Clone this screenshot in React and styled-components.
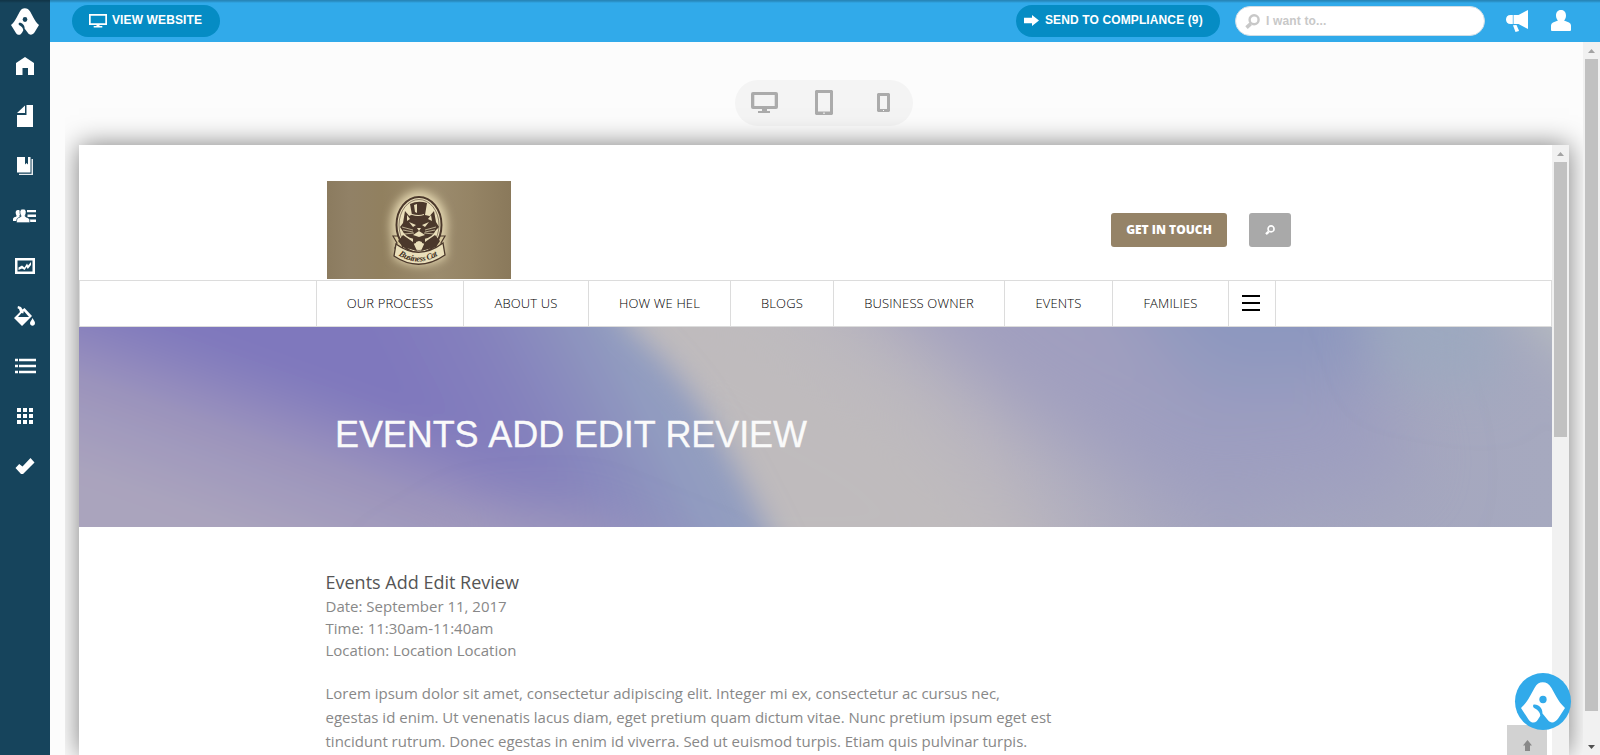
import React from "react";
import styled, { createGlobalStyle } from "styled-components";

const Global = createGlobalStyle`
  * { box-sizing: border-box; }
  html, body { margin: 0; padding: 0; overflow: hidden; }
  svg { display: block; flex: none; }
`;

const sans = `"Liberation Sans", Arial, sans-serif`;
const open = `"Open Sans", "Noto Sans", sans-serif`;

const Shell = styled.div`
  position: relative;
  display: flex;
  width: 100%;
  height: 100vh;
  overflow: hidden;
  background: #fcfcfc;
  font-family: ${sans};
`;

const TopShade = styled.div`
  position: absolute;
  inset: 0 0 auto 0;
  height: 3px;
  background: linear-gradient(rgba(0, 0, 0, 0.24), rgba(0, 0, 0, 0.12) 60%, transparent);
`;

const Sidebar = styled.nav`
  flex: none;
  width: 50px;
  background: #16445c;
`;

const SideLogo = styled.div`
  display: flex;
  justify-content: center;
  height: 41px;
  padding-top: 8px;
`;

const SideItem = styled.a`
  display: flex;
  align-items: center;
  justify-content: center;
  height: 50px;
  color: #fff;
`;

const Column = styled.div`
  flex: 1;
  display: flex;
  flex-direction: column;
  min-width: 0;
`;

const TopBar = styled.header`
  flex: none;
  display: flex;
  align-items: center;
  height: 42px;
  padding-left: 22px;
  background: #31aaea;
`;

const PillButton = styled.button`
  display: flex;
  align-items: center;
  width: ${(p) => p.$width}px;
  height: 32px;
  padding: 0 0 2px ${(p) => p.$inset}px;
  gap: ${(p) => p.$gap}px;
  border: 0;
  border-radius: 16px;
  background: #058cc4;
  color: #fff;
  font: bold 12px/16px ${sans};
  letter-spacing: 0.12px;
  white-space: nowrap;
`;

const TopRight = styled.div`
  display: flex;
  align-items: center;
  margin-left: auto;
  padding-right: 29px;
  color: #fff;
`;

const SearchBox = styled.div`
  display: flex;
  align-items: center;
  gap: 6px;
  width: 250px;
  height: 30px;
  margin: 0 21px 0 15px;
  padding-left: 9px;
  border: 1px solid #cfdde6;
  border-radius: 15px;
  background: #fff;
  color: #c8c8c8;
  font: bold 12px/16px ${sans};
  letter-spacing: 0.15px;
`;

const UserSlot = styled.div`
  margin: -1px 0 0 23px;
`;

const Body = styled.div`
  flex: 1;
  display: flex;
  min-height: 0;
`;

const Workspace = styled.main`
  flex: 1;
  display: flex;
  flex-direction: column;
  min-width: 0;
  margin-left: 15px;
  padding: 38px 14px 0;
  overflow: hidden;
`;

const Devices = styled.div`
  flex: none;
  align-self: center;
  display: flex;
  align-items: center;
  width: 178px;
  height: 46px;
  margin-bottom: 19px;
  padding: 0 0 1px 16px;
  border-radius: 23px;
  background: #f4f4f4;
  color: #ababab;
`;

const TabletSlot = styled.div`
  margin: 0 44px 0 37px;
`;

const Frame = styled.section`
  flex: 1;
  display: flex;
  min-height: 0;
  background: #fff;
  box-shadow: 0 0 25px rgba(0, 0, 0, 0.5);
`;

const Page = styled.div`
  flex: 1;
  min-width: 0;
  overflow: hidden;
`;

const Track = styled.div`
  flex: none;
  display: flex;
  flex-direction: column;
  align-items: center;
  width: 17px;
  background: #f1f1f1;
`;

const TrackArrow = styled.div`
  flex: none;
  display: flex;
  align-items: center;
  justify-content: center;
  width: 17px;
  height: 17px;
`;

const Thumb = styled.div`
  flex: none;
  width: 13px;
  height: ${(p) => p.$height}px;
  margin-bottom: auto;
  background: #c1c1c1;
`;

const SiteHeader = styled.div`
  display: flex;
  width: 1212px;
  height: 135px;
  padding-left: 248px;
`;

const SiteLogo = styled.div`
  margin: 36px auto 0 0;
`;

const SiteButton = styled.button`
  display: flex;
  align-items: center;
  justify-content: center;
  width: ${(p) => p.$width}px;
  height: 34px;
  margin: 68px 0 0 ${(p) => p.$left || 0}px;
  padding: 0;
  border: 0;
  border-radius: 3px;
  background: ${(p) => p.$bg};
  color: #fff;
  font: 800 12px/18px ${open};
  white-space: nowrap;
`;

const SiteNav = styled.nav`
  display: flex;
  height: 47px;
  padding-left: 236px;
  border: 1px solid #dcdcdc;
`;

const NavItem = styled.a`
  display: flex;
  align-items: center;
  justify-content: center;
  width: ${(p) => p.$width}px;
  padding-bottom: 2px;
  border-left: 1px solid #dcdcdc;
  color: #000;
  font: 300 13px/18px ${open};
  letter-spacing: 0.14px;
  white-space: nowrap;
`;

const MenuItem = styled.a`
  display: flex;
  flex-direction: column;
  align-items: center;
  justify-content: center;
  gap: 5px;
  width: 48px;
  padding: 0 2px 2px 0;
  border: solid #dcdcdc;
  border-width: 0 1px;
`;

const MenuBar = styled.span`
  width: 18px;
  height: 2px;
  background: #000;
`;

const Banner = styled.div`
  display: grid;
  height: 200px;
  overflow: hidden;
  > * { grid-area: 1 / 1; }
`;

const BannerTitle = styled.h1`
  z-index: 1;
  margin: 86px 0 0 256px;
  color: #fafafa;
  font: 400 36px/43px ${sans};
  font-kerning: none;
  letter-spacing: -0.1px;
  -webkit-text-stroke: 0.3px #fafafa;
  white-space: nowrap;
`;

const Article = styled.article`
  width: 1000px;
  padding: 42px 0 0 246.5px;
  color: #888;
  font: 400 15px/22px ${open};
  white-space: nowrap;
`;

const EventName = styled.h2`
  margin: 0;
  color: #555;
  font: 400 18px/26px ${open};
`;

const Copy = styled.p`
  margin: 20px 0 0;
  line-height: 24px;
`;

const BackToTop = styled.div`
  position: absolute;
  left: 1507px;
  top: 725px;
  display: flex;
  justify-content: center;
  width: 40px;
  height: 40px;
  padding-top: 15px;
  background: #d2d2d2;
`;

const Support = styled.div`
  position: absolute;
  left: 1515px;
  top: 673px;
  display: flex;
  justify-content: center;
  width: 56px;
  height: 57px;
  padding-top: 9px;
  border-radius: 50%;
  background: #31aaea;
`;

const Brand = ({ w, h, dot }) => (
  <svg width={w} height={h} viewBox="0 0 132 122" preserveAspectRatio="none">
    <path
      fill="#fff"
      d="M65 1C76 1 84 6 91 17L106 44C113 57 121 67 132 77L112 108C103 121 90 125 81 114L64 93C66 80 54 65 38 67C34 72 37 77 42 79C51 84 57 90 58 100C55 106 52 111 47 117C40 123 31 122 24 114L0 77C11 67 19 57 26 44L41 17C47 6 55 1 65 1Z"
    />
    <circle cx="66" cy="52" r="11" fill={dot} />
  </svg>
);

const Icon = ({ w, h, children }) => (
  <svg width={w} height={h} viewBox={`0 0 ${w} ${h}`} fill="currentColor">
    {children}
  </svg>
);

const sideIcons = [
  <Icon w={18} h={18}><path d="M9 0L18 6V18H12V11H6.500V18H0V6Z" /></Icon>,
  <Icon w={16} h={22}><path d="M9.500 0H16V22H0V10H9.500ZM8 .5V8H0Z" /></Icon>,
  <Icon w={16} h={18}>
    <path d="M0 0H8V7.500L9.500 6L11 7.500V0H13.500V15.500H0Z" />
    <path d="M14.500 2H16V18H2V16.800H14.500Z" opacity=".9" />
  </Icon>,
  <Icon w={24} h={14}>
    <path d="M14 1H23V3.300H14ZM14.500 5.500H23V8H14.500ZM16 10.500H23V13H17Z" />
    <path d="M5 1C7 1 8 3 7 5.500C6 7 6.500 7.500 7 8L4 11V12H0C0 9 0 8.500 3 7.700C4 7.200 3.500 6.500 3 5.500C2 3 3 1 5 1Z" />
    <path stroke="#16445c" strokeWidth=".7" d="M10 0C12.500 0 13.500 1.800 13 4.300C12.300 6.500 11.500 7.200 13 8C16.500 9 16.800 10 16.800 13.700H3.500C3.500 10 4 9 7.300 8C8.700 7.200 7.500 6.500 7 4.300C6.500 1.800 7.500 0 10 0Z" />
  </Icon>,
  <Icon w={20} h={16}>
    <path fillRule="evenodd" d="M0 0H20V16H0ZM2.500 2.500V13.500H17.500V2.500Z" />
    <path d="M3.500 12V9.500L7 7.500L9.500 9.500L12 5.500L13 7.500L16 4V7L12.800 11L11.500 9L9.700 12L7 10.500Z" />
  </Icon>,
  <Icon w={22} h={20}>
    <path fillRule="evenodd" d="M4 0L7 1L8.500 3.500L10.500 2L18 10L8 20L0 12L6 6L5 3L3.500 2.300ZM9.800 5L9.300 7.500L7.500 7L4 11H15Z" />
    <path d="M18.500 12C20 14.500 21 15.500 21 17C21 20.500 16 20.500 16 17C16 15.500 17.500 14.500 18.500 12Z" />
  </Icon>,
  <Icon w={21} h={16}>
    {[1, 7, 13].map((y) => <path key={y} d={`M0 ${y - 0.3}H3V${y + 2.3}H0ZM4 ${y - 0.3}H21V${y + 2.3}H4Z`} />)}
  </Icon>,
  <Icon w={16} h={16}>
    {[0, 6, 12].map((y) => <path key={y} d={`M0 ${y}H4V${y + 4}H0ZM6 ${y}H10V${y + 4}H6ZM12 ${y}H16V${y + 4}H12Z`} />)}
  </Icon>,
  <Icon w={20} h={17}><path d="M15.500 0L19.500 4.500L8 16H6L.5 10L4.200 6L7.500 8.500Z" /></Icon>,
];

const SmallMonitor = () => (
  <Icon w={18} h={15}>
    <path fillRule="evenodd" d="M0 1H18V12H0ZM1.700 2.700V10.300H16.300V2.700Z" />
    <path d="M7.500 11H10.500V13H13.300V14.500H4.700V13H7.500Z" />
  </Icon>
);

const Monitor = () => (
  <Icon w={27} h={21}>
    <path fillRule="evenodd" d="M2 0H25Q27 0 27 2V15Q27 17 25 17H2Q0 17 0 15V2Q0 0 2 0ZM3.300 3V14H23.700V3Z" />
    <path d="M11 17H16V19H19V21H7V19H11Z" />
  </Icon>
);

const Tablet = () => (
  <Icon w={18} h={25}>
    <path fillRule="evenodd" d="M1 0H17L18 1V24L17 25H1L0 24V1ZM3 3V21.500H15V3Z" />
    <rect x="8" y="22.500" width="2" height="1.500" fill="#ddd" />
  </Icon>
);

const Phone = () => (
  <Icon w={13} h={19}>
    <path fillRule="evenodd" d="M1 0H12L13 1V18L12 19H1L0 18V1ZM3 3V16H10V3Z" />
    <rect x="6" y="17" width="1" height="1" fill="#fff" />
  </Icon>
);

const Lens = ({ size }) => (
  <svg width={size} height={size} viewBox="0 0 16 16" fill="none" stroke="currentColor">
    <circle cx="9.700" cy="6.200" r="4.800" strokeWidth="2.600" />
    <path d="M6 10.500L1.600 14.500" strokeWidth="3.800" />
  </svg>
);

const Horn = () => (
  <Icon w={22} h={22}>
    <path d="M22 0V19L12.500 14H7.500V5H12.500Z" />
    <path d="M6.800 5V14H4.500C1.500 14 0 12 0 9.500C0 7 1.500 5 4.500 5Z" />
    <path d="M7 15.200L10.500 15L12.500 19.500L13 21L9.500 22Z" />
  </Icon>
);

const Person = () => (
  <Icon w={20} h={21}>
    <path d="M10 0C13.500 0 15 2.500 15 5.500C15 8 14 9.500 13 10.500L18 12.500Q20 13.500 20 15.500V20Q20 21 19 21H1Q0 21 0 20V15.500Q0 13.500 2 12.500L7 10.500C6 9.500 5 8 5 5.500C5 2.500 6.500 0 10 0Z" />
  </Icon>
);

const Triangle = ({ down, color = "#a3a3a3" }) => (
  <svg width="7" height="4" viewBox="0 0 7 4" fill={color}>
    <path d={down ? "M0 0H7L3.500 4Z" : "M0 4H7L3.500 0Z"} />
  </svg>
);

const CatLogo = () => (
  <svg width="184" height="98" viewBox="0 0 184 98">
    <defs>
      <linearGradient id="leather">
        <stop offset="0" stopColor="#8b7b5f" /><stop offset=".12" stopColor="#918166" />
        <stop offset=".3" stopColor="#91805f" /><stop offset=".6" stopColor="#9b8b6d" />
        <stop offset=".78" stopColor="#958465" /><stop offset="1" stopColor="#8a795b" />
      </linearGradient>
      <filter id="glow" x="-50%" y="-50%" width="200%" height="200%"><feGaussianBlur stdDeviation="5" /></filter>
      <path id="ribbon" d="M71.500 74Q92 88 115 72" />
    </defs>
    <rect width="184" height="98" fill="url(#leather)" />
    <g fill="#e5d8b1" filter="url(#glow)">
      <ellipse cx="92" cy="45" rx="28" ry="35" /><path d="M65 53H119V76Q92 92 67 77Z" />
    </g>
    <g stroke="#4b382b">
      <path fill="#d9ca9f" strokeWidth="1.200" d="M66 55H73L76 68L68 67L70 62ZM118 55H111L108 68L116 67L114 62Z" />
      <ellipse cx="92" cy="44" rx="22.500" ry="28" fill="#eadfba" strokeWidth="2" />
      <ellipse cx="92" cy="44" rx="20" ry="25.500" fill="none" strokeWidth=".6" />
    </g>
    <g fill="#4b382b">
      <path d="M83 23Q91 19 100 22L98 34Q106 35 104 38Q91 41 81 37Q82 34 85 34Z" />
      <path d="M78 30L84 37Q92 40 101 37L107 30L109 41L112 46L109 49Q105 57 97 58L92 60L87 58Q78 56 75 49L73 46L76 42Z" />
      <path d="M76 54L86 61L90 70L76 66L71 60ZM108 54L98 61L94 70L109 66L113 60Z" />
      <path d="M86 57L92 59L98 57V63L92 61L86 63Z" />
    </g>
    <g fill="#eadfba">
      <path d="M82 41L89 44L86 46ZM102 41L95 44L98 46ZM90 47H94L92 50ZM86 54L92 50L98 54L92 56ZM85 33Q92 35 97 33V34Q91 36 85 34ZM87 24L90 23V32L88 31ZM80 34L83 38L80 40ZM104 34L101 38L105 40ZM89 61L92 60L95 61L94 68H90Z" />
      <path d="M75 46L86 49M76 49L86 51M77 53L87 52M109 46L98 49M108 49L98 51M107 53L97 52" stroke="#eadfba" strokeWidth=".7" />
    </g>
    <path d="M69 63Q92 80 116 62L118 74Q92 92 67 75Z" fill="#eadfba" stroke="#4b382b" strokeWidth="1.300" />
    <text fill="#3d2c20" fontFamily="Liberation Serif, serif" fontStyle="italic" fontWeight="bold" fontSize="8.600">
      <textPath href="#ribbon" textLength="42">Business Cat</textPath>
    </text>
  </svg>
);

const BannerArt = () => (
  <svg width="1473" height="200" viewBox="0 0 1473 200">
    <defs>
      <linearGradient id="sky" x1="0" x2="1473" y1="0" y2="0" gradientUnits="userSpaceOnUse">
        <stop offset=".45" stopColor="#bebbbe" /><stop offset=".62" stopColor="#b8b4bf" />
        <stop offset=".78" stopColor="#a4a5be" /><stop offset="1" stopColor="#a6a9bf" />
      </linearGradient>
      <linearGradient id="violet" x1="150" y1="200" x2="215" y2="15" gradientUnits="userSpaceOnUse">
        <stop offset="0" stopColor="#aaa4bd" /><stop offset=".45" stopColor="#9c94bc" />
        <stop offset=".7" stopColor="#8a83bd" /><stop offset=".87" stopColor="#7f78bd" />
      </linearGradient>
      <linearGradient id="edge" x1="350" y1="120" x2="545" y2="20" gradientUnits="userSpaceOnUse">
        <stop offset="0" stopColor="#8680bd" stopOpacity="0" />
        <stop offset=".45" stopColor="#8684bd" stopOpacity=".8" />
        <stop offset="1" stopColor="#929dc0" />
      </linearGradient>
      {[14, 25, 38].map((b) => (
        <filter key={b} id={`soft${b}`} filterUnits="userSpaceOnUse" x="-300" y="-300" width="2100" height="800">
          <feGaussianBlur stdDeviation={b} />
        </filter>
      ))}
    </defs>
    <rect width="1473" height="200" fill="url(#sky)" />
    <g filter="url(#soft38)">
      <path fill="#a09fbf" d="M640 -160H1100L1240 140L1120 190L930 80Z" />
      <path fill="#8c97bf" d="M980 -120H1340L1290 80L1140 80Z" />
      <path fill="#bfbbbd" d="M560 -60L640 -20L840 90L1010 280H560Z" />
      <path fill="#9d9ec0" d="M1000 70L1300 50L1340 160L1140 180Z" />
    </g>
    <g filter="url(#soft25)">
      <path fill="#9ba9bf" d="M1270 -60H1420V70L1310 50Z" opacity=".8" />
      <path fill="#b8bec0" d="M1375 -90H1540V80Z" />
    </g>
    <g filter="url(#soft14)">
      <path fill="url(#violet)" d="M-200 -200H430L550 0Q612 55 642 115Q680 180 735 300H-200Z" />
      <path fill="url(#edge)" d="M200 -200H430L550 0Q612 55 642 115Q680 180 735 300H200Z" />
    </g>
    <g filter="url(#soft25)">
      <path fill="#a19bbd" d="M400 190L500 185L660 250H300Z" opacity=".8" />
    </g>
  </svg>
);

const navItems = [
  ["OUR PROCESS", 147], ["ABOUT US", 125], ["HOW WE HEL", 142], ["BLOGS", 103],
  ["BUSINESS OWNER", 171], ["EVENTS", 108], ["FAMILIES", 116],
];

export default function App() {
  return (
    <Shell>
      <Global />
      <Sidebar>
        <SideLogo><Brand w={28} h={27} dot="#16445c" /></SideLogo>
        {sideIcons.map((icon, i) => <SideItem key={i}>{icon}</SideItem>)}
      </Sidebar>
      <Column>
        <TopBar>
          <PillButton $width={148} $inset={17} $gap={5}><SmallMonitor />VIEW WEBSITE</PillButton>
          <TopRight>
            <PillButton $width={204} $inset={8} $gap={6}>
              <Icon w={15} h={11}><path d="M0 2.700H8V0L15 5.500L8 11V8.300H0Z" /></Icon>
              SEND TO COMPLIANCE (9)
            </PillButton>
            <SearchBox><Lens size={15} />I want to...</SearchBox>
            <Horn />
            <UserSlot><Person /></UserSlot>
          </TopRight>
        </TopBar>
        <Body>
          <Workspace>
            <Devices><Monitor /><TabletSlot><Tablet /></TabletSlot><Phone /></Devices>
            <Frame>
              <Page>
                <SiteHeader>
                  <SiteLogo><CatLogo /></SiteLogo>
                  <SiteButton $width={116} $bg="#958367">GET IN TOUCH</SiteButton>
                  <SiteButton $width={42} $left={22} $bg="#a9a9a9"><Lens size={10} /></SiteButton>
                </SiteHeader>
                <SiteNav>
                  {navItems.map(([label, width]) => <NavItem key={label} $width={width}>{label}</NavItem>)}
                  <MenuItem><MenuBar /><MenuBar /><MenuBar /></MenuItem>
                </SiteNav>
                <Banner>
                  <BannerArt />
                  <BannerTitle>EVENTS ADD EDIT REVIEW</BannerTitle>
                </Banner>
                <Article>
                  <EventName>Events Add Edit Review</EventName>
                  <div>Date: September 11, 2017</div>
                  <div>Time: 11:30am-11:40am</div>
                  <div>Location: Location Location</div>
                  <Copy>
                    Lorem ipsum dolor sit amet, consectetur adipiscing elit. Integer mi ex, consectetur ac cursus nec,<br />
                    egestas id enim. Ut venenatis lacus diam, eget pretium quam dictum vitae. Nunc pretium ipsum eget est<br />
                    tincidunt rutrum. Donec egestas in enim id viverra. Sed ut euismod turpis. Etiam quis pulvinar turpis.
                  </Copy>
                </Article>
              </Page>
              <Track>
                <TrackArrow><Triangle /></TrackArrow>
                <Thumb $height={275} />
              </Track>
            </Frame>
          </Workspace>
          <Track>
            <TrackArrow><Triangle /></TrackArrow>
            <Thumb $height={652} />
            <TrackArrow><Triangle down color="#505050" /></TrackArrow>
          </Track>
        </Body>
      </Column>
      <BackToTop>
        <Icon w={9} h={11}><path fill="#888" d="M4.500 0L9 5.500H7V11H2V5.500H0Z" /></Icon>
      </BackToTop>
      <Support><Brand w={44} h={41} dot="#31aaea" /></Support>
      <TopShade />
    </Shell>
  );
}
